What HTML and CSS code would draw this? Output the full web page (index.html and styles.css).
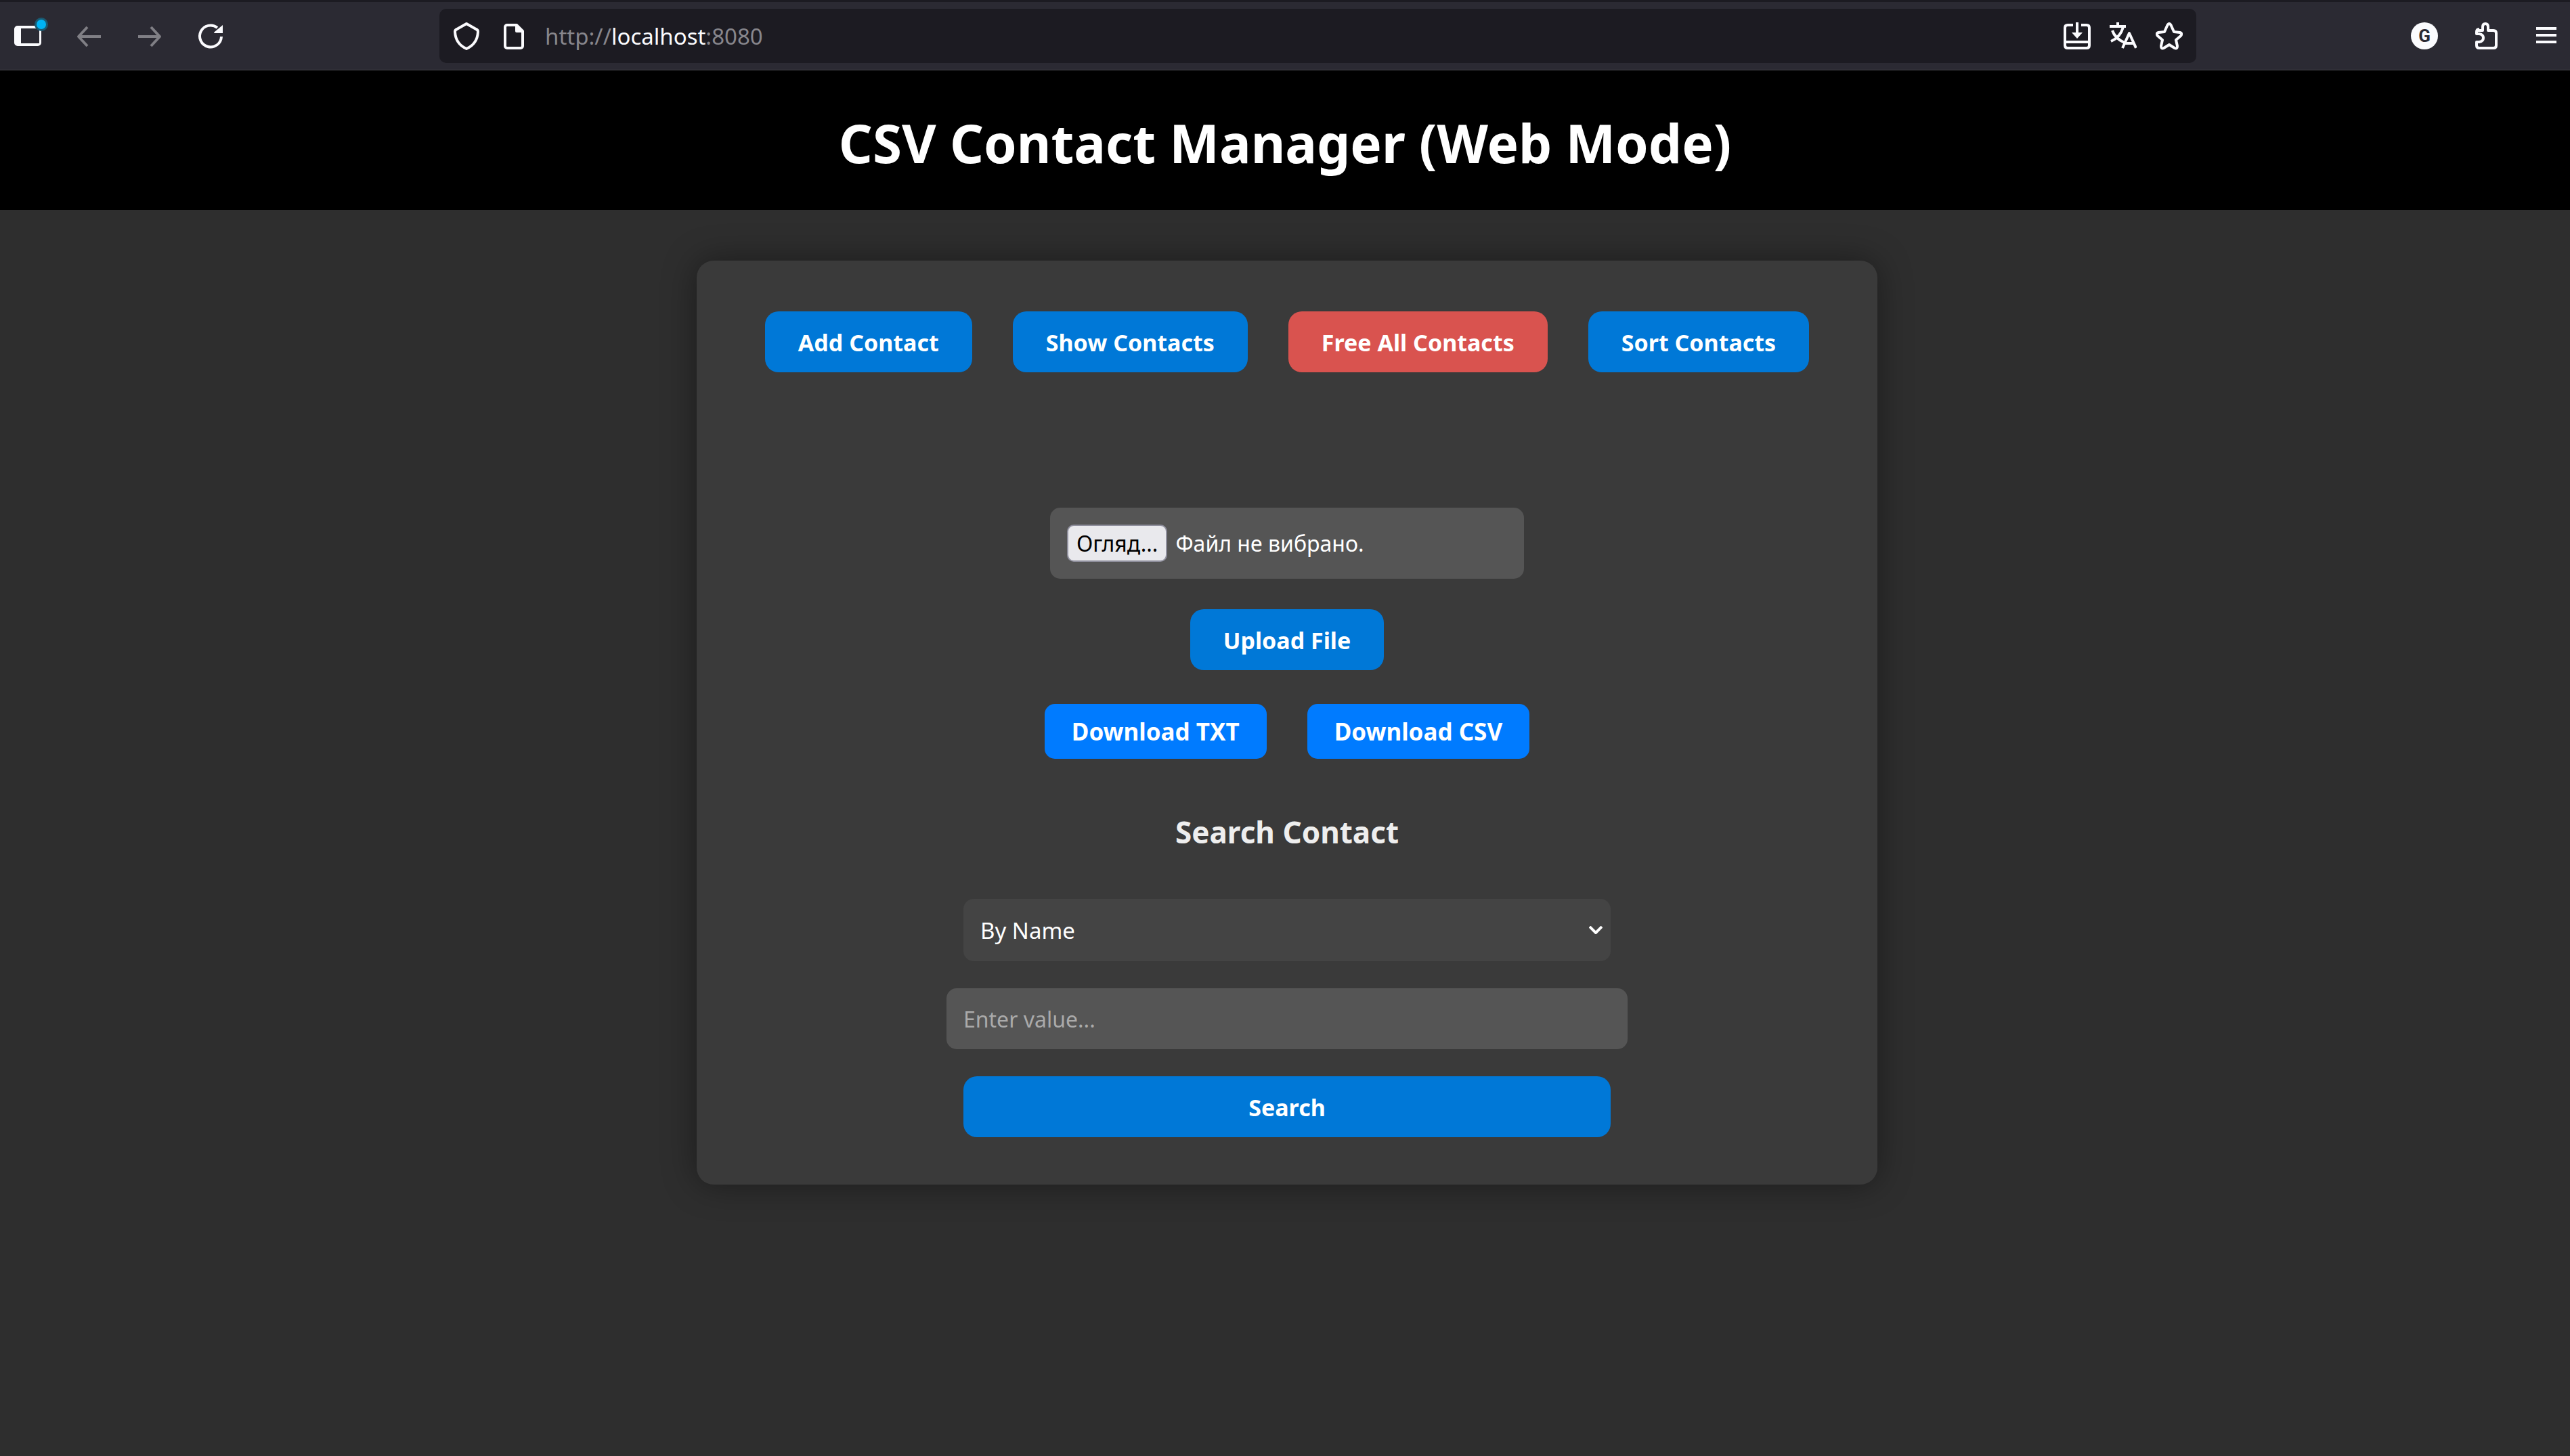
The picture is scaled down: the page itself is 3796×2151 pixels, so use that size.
FILE: index.html
```html
<!DOCTYPE html>
<html lang="en">
<head>
<meta charset="utf-8">
<title>CSV Contact Manager</title>
<link rel="stylesheet" href="styles.css">
</head>
<body>
<nav class="toolbar" aria-label="Browser toolbar">
  <div class="nav-buttons">
    <button class="tool" aria-label="Sidebar"><svg width="60" height="60" viewBox="0 0 60 60"><path fill="#fbfbfe" fill-rule="evenodd" d="M15 15h30a5 5 0 0 1 5 5v20a5 5 0 0 1-5 5H15a5 5 0 0 1-5-5V20a5 5 0 0 1 5-5zM20 19v22h27V19z"/><circle cx="50" cy="13" r="10" fill="#1a5a72"/><circle cx="50" cy="13" r="7" fill="#00b3f4"/></svg></button>
    <button class="tool dim" aria-label="Back"><svg width="60" height="60" viewBox="0 0 60 60"><path class="line" d="M48 31H15M28 17L15 31l13 14"/></svg></button>
    <button class="tool dim" aria-label="Forward"><svg width="60" height="60" viewBox="0 0 60 60"><path class="line" d="M13 31h33M32 17l13 14-13 14"/></svg></button>
    <button class="tool" aria-label="Reload"><svg width="60" height="60" viewBox="0 0 60 60"><path class="line" d="M46 31A16 16 0 1 1 40 18"/><path fill="currentColor" d="M48 14v12H36q-2-1 0-2z"/></svg></button>
  </div>
  <div class="address">
    <svg width="40" height="60" viewBox="0 0 40 60"><path class="line" d="M20 12l14 8q3 1 3 4-1 18-17 25Q4 42 3 24q0-3 3-4z"/></svg>
    <svg width="40" height="60" viewBox="0 0 40 60"><path class="line" d="M12 14h14l9 9v22a3 3 0 0 1-3 3H12a3 3 0 0 1-3-3V17a3 3 0 0 1 3-3z"/><path fill="currentColor" d="M24 14h4l8 8v3H26q-2 0-2-2z"/></svg>
    <span class="url">http://<b>localhost</b>:8080</span>
    <svg width="40" height="60" viewBox="0 0 40 60"><path class="line" d="M14 14H6q-4 0-4 4v26q0 4 4 4h28q4 0 4-4V18q0-4-4-4h-8M2 39h36M20 10v16"/><path fill="currentColor" d="M12 25h16l-8 9z"/></svg>
    <svg width="40" height="60" viewBox="0 0 40 60"><path class="line" d="M0 16h24M12 10v6M4 22q4 12 18 18M20 17Q16 32 2 38M19 48l10-22 10 22M22 41h14"/></svg>
    <svg width="40" height="60" viewBox="0 0 40 60"><path class="line" d="M17 15q3-6 6 0l4 9 9 1q4 1 1 5l-7 6 2 9q0 5-4 3l-8-5-8 5q-4 2-4-3l2-9-7-6q-3-4 1-5l9-1z"/></svg>
  </div>
  <div class="menu-buttons">
    <button class="tool account" aria-label="Account">G</button>
    <button class="tool" aria-label="Extensions"><svg width="40" height="60" viewBox="0 0 40 60"><path class="line" d="M8 22h8v-5q0-5 4-5t4 5v5h8q4 0 4 4v18q0 4-4 4H11q-4 0-4-4v-5h4q6-1 6-6t-6-6H7v-3q0-4 4-4"/></svg></button>
    <button class="tool" aria-label="Menu"><svg width="40" height="60" viewBox="0 0 40 60"><path class="line" d="M5 19h30M5 29h30M5 39h30"/></svg></button>
  </div>
</nav>
<header class="banner"><h1>CSV Contact Manager (Web Mode)</h1></header>
<main class="page">
  <section class="card">
    <div class="actions">
      <button class="btn">Add Contact</button>
      <button class="btn">Show Contacts</button>
      <button class="btn danger">Free All Contacts</button>
      <button class="btn">Sort Contacts</button>
    </div>
    <form class="upload">
      <label class="file"><input type="file" class="file-input" aria-label="Файл"><span class="browse">Огляд...</span><span>Файл не вибрано.</span></label>
      <button type="button" class="btn">Upload File</button>
    </form>
    <div class="downloads">
      <a class="download" href="#txt">Download TXT</a>
      <a class="download" href="#csv">Download CSV</a>
    </div>
    <h3>Search Contact</h3>
    <form class="search">
      <div class="select-wrap">
        <select class="select" aria-label="Search field"><option>By Name</option></select>
        <svg class="chevron" width="20" height="12" viewBox="0 0 20 12"><path class="line" d="M1 1l9 9 9-9"/></svg>
      </div>
      <input class="value" type="text" placeholder="Enter value..." aria-label="Value">
      <button type="button" class="btn submit">Search</button>
    </form>
  </section>
</main>
</body>
</html>
```
FILE: styles.css
```css
* { box-sizing: border-box; }
body {
  margin: 0;
  min-height: 100vh;
  background: #2e2e2e;
  color: #eee;
  font-family: "Noto Sans", sans-serif;
  font-size: 32px;
}
button, input, select { font: inherit; }
svg { display: block; flex: none; }
.line { fill: none; stroke: currentColor; stroke-width: 4; stroke-linejoin: round; }

.toolbar {
  display: flex;
  align-items: center;
  height: 104px;
  padding: 0 15px 0 11px;
  background: #2b2a33;
  border-top: 3px solid #1c1b22;
  border-bottom: 1px solid #45444c;
  color: #fbfbfe;
}
.tool { padding: 0; border: 0; background: none; color: inherit; }
.dim { color: #807f85; }
.nav-buttons { display: flex; gap: 30px; }
.address {
  display: flex;
  align-items: center;
  gap: 28px;
  width: 2595px;
  height: 80px;
  margin-left: 308px;
  padding: 0 20px;
  border-radius: 10px;
  background: #1c1b22;
}
.url { flex: 1; color: #87868c; font-size: 33px; }
.url b { color: #fbfbfe; font-weight: 400; }
.menu-buttons { display: flex; align-items: center; gap: 50px; margin-left: auto; }
.account {
  width: 40px;
  height: 40px;
  border-radius: 50%;
  background: #fbfbfe;
  color: #2b2a33;
  font-family: Roboto, sans-serif;
  font-size: 26px;
  font-weight: 700;
  line-height: 40px;
}

.banner {
  padding: 54px 0 46px;
  background: #000;
  color: #fff;
  text-align: center;
}
h1 { margin: 0; font-size: 78px; line-height: 106px; }

.page { padding: 75px 20px 50px 26px; }
.card {
  max-width: 1744px;
  margin: 0 auto;
  padding: 75px 80px 70px;
  border-radius: 25px;
  background: #3a3a3a;
  box-shadow: 0 0 50px rgba(0, 0, 0, 0.4);
}
.actions { display: flex; justify-content: center; gap: 60px; }
.btn {
  padding: 21px 49px 19px;
  border: 0;
  border-radius: 20px;
  background: #0078d7;
  color: #fff;
  font-size: 34px;
  font-weight: 700;
  line-height: 50px;
  white-space: nowrap;
}
.danger { background: #d9534f; }
.upload {
  display: flex;
  flex-direction: column;
  align-items: center;
  gap: 45px;
  margin-top: 200px;
}
.file {
  display: flex;
  align-items: center;
  gap: 12px;
  width: 700px;
  padding: 25px;
  border-radius: 15px;
  background: #555;
  color: #fff;
}
.file-input { position: absolute; width: 1px; height: 1px; opacity: 0; }
.browse {
  padding: 0 12px;
  border: 2px solid #8f8f9d;
  border-radius: 10px;
  background: #e9e9ed;
  color: #000;
  line-height: 51px;
}
.downloads { display: flex; justify-content: center; gap: 60px; margin-top: 50px; }
.download {
  padding: 15px 40px;
  border-radius: 15px;
  background: #007bff;
  color: #fff;
  font-size: 35px;
  font-weight: 700;
  line-height: 51px;
  text-decoration: none;
}
h3 { margin: 76px 0 66px; font-size: 44px; line-height: 65px; text-align: center; }
.search { display: flex; flex-direction: column; align-items: center; gap: 40px; }
.select-wrap { display: grid; align-items: center; width: 956px; }
.select {
  grid-area: 1 / 1;
  height: 92px;
  padding: 0 25px;
  border: 0;
  border-radius: 15px;
  appearance: none;
  background: #444;
  color: #fff;
  font-size: 33px;
}
.chevron { grid-area: 1 / 1; justify-self: end; margin-right: 12px; color: #fff; pointer-events: none; }
.value {
  width: 1006px;
  height: 90px;
  padding: 0 25px;
  border: 0;
  border-radius: 15px;
  background: #555;
  color: #fff;
}
.value::placeholder { color: #aaa; }
.submit { width: 956px; }
```
